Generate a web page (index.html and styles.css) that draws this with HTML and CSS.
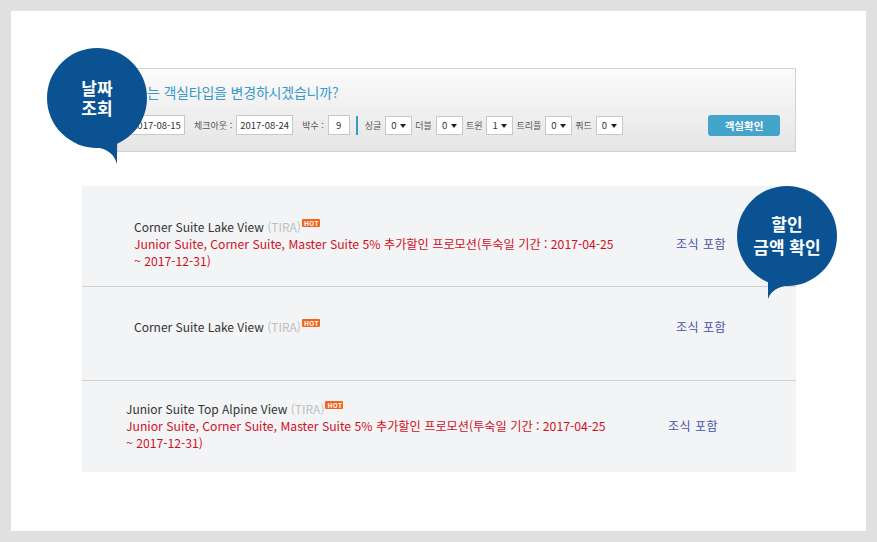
FILE: index.html
```html
<!DOCTYPE html>
<html lang="ko">
<head>
  <meta charset="UTF-8">
  <title>객실 변경</title>
  <link rel="stylesheet" href="styles.css">
</head>
<body>
  <div class="card">

    <div class="search-box">
      <div class="search-title">는 객실타입을 변경하시겠습니까?</div>
      <div class="search-row">
        <span class="field date">2017-08-15</span>
        <span class="lbl">체크아웃 :</span>
        <span class="field date">2017-08-24</span>
        <span class="lbl">박수 :</span>
        <span class="field nights">9</span>
        <span class="sep"></span>
        <span class="lbl">싱글</span>
        <span class="sel">0</span>
        <span class="lbl">더블</span>
        <span class="sel">0</span>
        <span class="lbl">트윈</span>
        <span class="sel">1</span>
        <span class="lbl">트리플</span>
        <span class="sel">0</span>
        <span class="lbl">쿼드</span>
        <span class="sel">0</span>
        <button class="btn-check">객실확인</button>
      </div>
    </div>

    <div class="room-list">
      <div class="room room-1">
        <div class="room-info">
          <div class="room-name">Corner Suite Lake View <span class="code">(TIRA)</span><span class="hot">HOT</span></div>
          <div class="promo">Junior Suite, Corner Suite, Master Suite 5% 추가할인 프로모션(투숙일 기간 : <span class="nobr">2017-04-25</span> <span class="nobr">~ 2017-12-31)</span></div>
        </div>
        <div class="meal">조식 포함</div>
      </div>
      <div class="room room-2">
        <div class="room-info">
          <div class="room-name">Corner Suite Lake View <span class="code">(TIRA)</span><span class="hot">HOT</span></div>
        </div>
        <div class="meal">조식 포함</div>
      </div>
      <div class="room room-3">
        <div class="room-info">
          <div class="room-name">Junior Suite Top Alpine View <span class="code">(TIRA)</span><span class="hot">HOT</span></div>
          <div class="promo">Junior Suite, Corner Suite, Master Suite 5% 추가할인 프로모션(투숙일 기간 : <span class="nobr">2017-04-25</span> <span class="nobr">~ 2017-12-31)</span></div>
        </div>
        <div class="meal">조식 포함</div>
      </div>
    </div>

    <!-- 말풍선 -->
    <div class="bubble bubble-date">
      <svg width="100" height="120" viewBox="0 0 100 120">
        <circle cx="50" cy="50" r="50" fill="#0a5291"/>
        <path d="M47 99 Q66 101 70 116 L70 88 Z" fill="#0a5291"/>
      </svg>
      <div class="bubble-body"><span class="bubble-text">날짜<br>조회</span></div>
    </div>

    <div class="bubble bubble-price">
      <svg width="100" height="120" viewBox="0 0 100 120">
        <circle cx="50" cy="50" r="50" fill="#0a5291"/>
        <path d="M53 99 Q35 101 31 113 L31 88 Z" fill="#0a5291"/>
      </svg>
      <div class="bubble-body"><span class="bubble-text">할인<br>금액 확인</span></div>
    </div>

  </div>
</body>
</html>
```

FILE: styles.css
```css
body {
  margin: 0;
  padding: 11px;
  background: #e0e0e0;
  font-family: "Noto Sans CJK KR", "Noto Sans", sans-serif;
}

.card {
  position: relative;
  width: 855px;
  height: 520px;
  background: #fff;
  padding-top: 57px;
  box-sizing: border-box;
}

/* 검색 박스 */
.search-box {
  margin-left: 106px;
  width: 679px;
  height: 84px;
  box-sizing: border-box;
  border: 1px solid #d2d2d2;
  background: linear-gradient(#fbfbfb, #e5e5e5);
  padding: 13px 15px 0 10px;
}

.search-title {
  font-size: 14px;
  line-height: 20px;
  color: #3799c9;
  margin-left: 19px;
  letter-spacing: -0.2px;
}

.search-row {
  display: flex;
  align-items: center;
  margin-top: 12px;
  height: 22px;
}

.field {
  background: #fff;
  border: 1px solid #c8c8c8;
  height: 18px;
  line-height: 18px;
  font-size: 9.5px;
  color: #333;
  text-align: center;
}

.field.date {
  width: 55px;
}

.field.nights {
  width: 20px;
}

.lbl {
  font-size: 9px;
  color: #555;
  margin: 0 4px 0 9px;
}

.sep {
  width: 2px;
  height: 19px;
  background: #3a9bc8;
  margin-left: 6px;
}

.sep + .lbl {
  margin-left: 7px;
}

.sel + .lbl {
  margin-left: 3px;
}

.sel {
  position: relative;
  width: 20px;
  height: 17px;
  line-height: 17px;
  padding-left: 5px;
  background: #fff;
  border: 1px solid #c8c8c8;
  font-size: 9.5px;
  color: #333;
}

.sel::after {
  content: "";
  position: absolute;
  right: 5px;
  top: 7px;
  border-left: 3px solid transparent;
  border-right: 3px solid transparent;
  border-top: 4px solid #222;
}

.btn-check {
  margin-left: auto;
  width: 72px;
  height: 21px;
  border: none;
  border-radius: 3px;
  background: #44a4cb;
  color: #fff;
  font-family: inherit;
  font-size: 10.5px;
  font-weight: bold;
  padding: 0;
}

/* 객실 목록 */
.room-list {
  margin: 34px 0 0 71px;
  width: 714px;
  height: 286px;
  background: #f3f4f6;
}

.room {
  display: flex;
  align-items: flex-start;
  padding-left: 52px;
  box-sizing: border-box;
  border-bottom: 1px solid #cfcfcf;
  font-size: 12px;
  line-height: 17.5px;
}

.room-1 {
  height: 101px;
  padding-top: 32px;
}

.room-2 {
  height: 94px;
  padding-top: 31px;
}

.room-3 {
  height: 91px;
  padding-top: 19px;
  padding-left: 44px;
  border-bottom: none;
}

.room-info {
  width: 490px;
}

.room-name {
  color: #333;
}

.code {
  color: #c0c0c0;
}

.hot {
  display: inline-block;
  vertical-align: top;
  margin: 1px 0 0 1px;
  height: 8px;
  line-height: 8px;
  padding: 0 1px 0 2px;
  background: #f2661c;
  border-radius: 1px;
  color: #fff;
  font-size: 6.5px;
  font-weight: bold;
  letter-spacing: 0.4px;
}

.promo {
  color: #d0101e;
  font-size: 12.2px;
}

.nobr {
  white-space: nowrap;
}

.meal {
  margin: 17px 0 0 52px;
  color: #4552a8;
  letter-spacing: 0.5px;
}

.room-2 .meal {
  margin-top: 0;
}

/* 말풍선 */
.bubble {
  position: absolute;
  width: 100px;
  height: 120px;
}

.bubble svg {
  display: block;
}

.bubble-date {
  left: 36px;
  top: 37px;
}

.bubble-price {
  left: 726px;
  top: 175px;
}

.bubble-body {
  position: absolute;
  left: 0;
  top: 0;
  width: 100px;
  height: 100px;
  display: flex;
  align-items: center;
  justify-content: center;
}

.bubble-text {
  text-align: center;
  color: #fff;
  font-size: 17px;
  font-weight: bold;
  line-height: 20px;
}

.bubble-price .bubble-text {
  line-height: 23px;
  margin-bottom: 2px;
}
```
